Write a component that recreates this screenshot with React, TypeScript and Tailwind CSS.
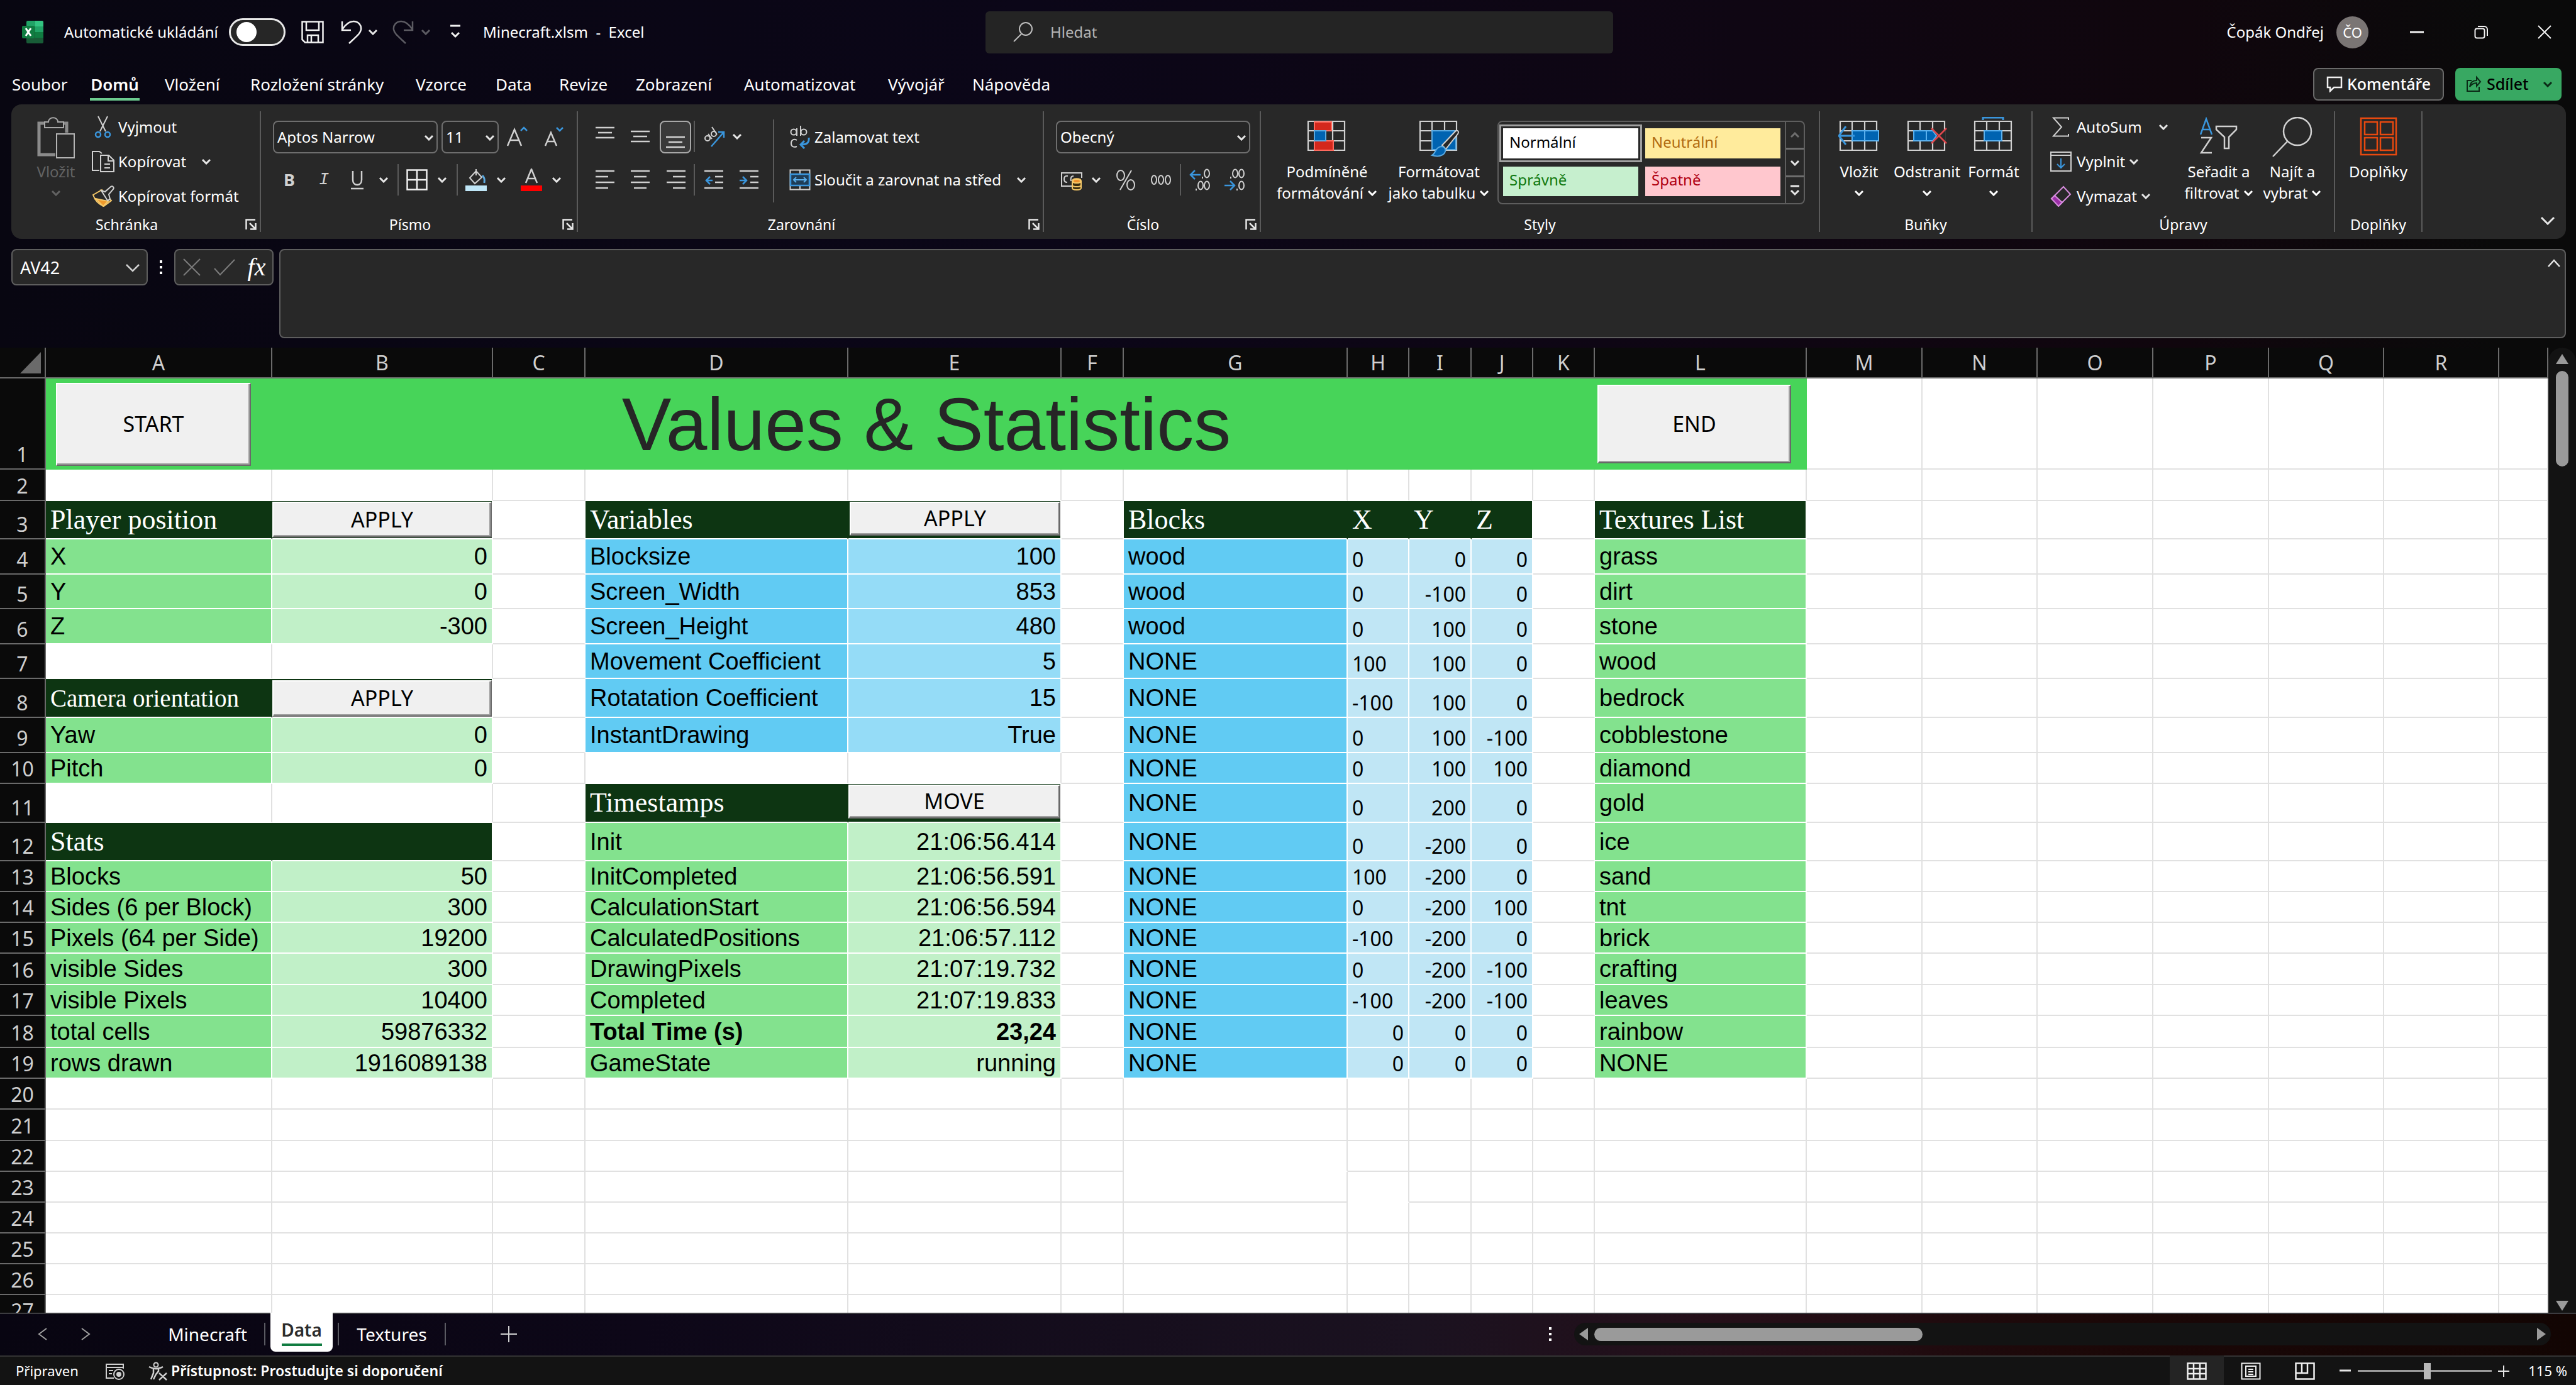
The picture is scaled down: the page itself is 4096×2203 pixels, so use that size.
import React from "react";

/* ---------- shared icons ---------- */

type IconProps = { w: number; h: number; children: React.ReactNode; box?: string; className?: string };

function Icon({ w, h, children, box, className }: IconProps) {
  return (
    <svg
      width={w}
      height={h}
      viewBox={box ?? `0 0 ${w} ${h}`}
      fill="none"
      stroke="#d0d0d0"
      strokeWidth={2}
      aria-hidden="true"
      className={`block shrink-0 ${className ?? ""}`}
    >
      {children}
    </svg>
  );
}

function Chevron({ color = "#e6e6e6", up = false }: { color?: string; up?: boolean }) {
  return (
    <Icon w={16} h={10}>
      <path d={up ? "M2 8l6-6 6 6" : "M2 2l6 6 6-6"} stroke={color} strokeWidth={3} />
    </Icon>
  );
}

function Launcher({ label }: { label: string }) {
  return (
    <button aria-label={label} className="flex h-4 w-[28px] items-center justify-center">
      <Icon w={18} h={18}>
        <path d="M1.5 17V1.5H16M7 7l9 9M16.500 7v9.500H8" stroke="#e6e6e6" strokeWidth={2.5} />
      </Icon>
    </button>
  );
}

function Lines({ rows }: { rows: [number, number, number][] }) {
  return (
    <Icon w={32} h={36}>
      {rows.map(([x, y, w]) => (
        <path key={y} d={`M${x} ${y}h${w}`} strokeWidth={2.500} />
      ))}
    </Icon>
  );
}

function TableGrid({ children }: { children?: React.ReactNode }) {
  return (
    <Icon w={66} h={64}>
      <path d="M3 7h58v46H3zM3 22h58M3 38h58M22 7v46M42 7v46" strokeWidth={2.200} />
      {children}
    </Icon>
  );
}

/* ---------- ribbon building blocks ---------- */

function Group({
  label,
  width,
  launcher,
  children,
}: {
  label: string;
  width: string;
  launcher?: boolean;
  children: React.ReactNode;
}) {
  return (
    <section aria-label={label} className={`my-[11px] flex shrink-0 flex-col border-r-2 border-[#5a5a5a] ${width}`}>
      <div className="flex h-[172px]">{children}</div>
      <div className="flex h-4 items-center leading-4">
        <span className="flex-1 text-center text-[23px]">{label}</span>
        {launcher && <Launcher label={`${label} – možnosti`} />}
      </div>
    </section>
  );
}

function BigButton({
  icon,
  line1,
  line2,
  arrow,
  className,
}: {
  icon: React.ReactNode;
  line1: string;
  line2?: string;
  arrow?: boolean;
  className: string;
}) {
  return (
    <button className={`flex shrink-0 flex-col items-center whitespace-nowrap pt-[9px] ${className}`}>
      <span className="flex h-[64px] items-start justify-center">{icon}</span>
      <span className="mt-[7px] block h-[34px] leading-8">{line1}</span>
      <span className="flex h-8 items-center gap-[6px] leading-8">
        {line2}
        {arrow && <Chevron color="currentColor" />}
      </span>
    </button>
  );
}

function Row({
  icon,
  label,
  arrow,
  iconWidth,
}: {
  icon: React.ReactNode;
  label: string;
  arrow?: string;
  iconWidth: string;
}) {
  return (
    <button className="flex h-[55px] items-center whitespace-nowrap">
      <span className={`flex justify-center ${iconWidth}`}>{icon}</span>
      {label}
      {arrow && (
        <span className={arrow}>
          <Chevron />
        </span>
      )}
    </button>
  );
}

function Tool({ label, className, children }: { label: string; className: string; children: React.ReactNode }) {
  return (
    <button aria-label={label} className={`flex h-[50px] shrink-0 items-center justify-center ${className}`}>
      {children}
    </button>
  );
}

function Combo({ label, value, className }: { label: string; value: string; className: string }) {
  return (
    <div className={`relative h-[52px] shrink-0 ${className}`}>
      <select
        aria-label={label}
        className="h-full w-full appearance-none rounded-lg border-2 border-[#6e6e6e] bg-[#262626] pl-[5px] text-white"
      >
        <option>{value}</option>
      </select>
      <span className="pointer-events-none absolute top-[22px] right-[6px]">
        <Chevron />
      </span>
    </div>
  );
}

const Sep = ({ className = "" }: { className?: string }) => (
  <span className={`h-[50px] w-[2px] shrink-0 bg-[#5a5a5a] ${className}`} />
);

/* ---------- title bar ---------- */

function TitleBar() {
  return (
    <header className="flex h-[102px] shrink-0 items-center">
      <div className="flex w-[1567px] shrink-0 items-center pl-[35px]">
        <svg width="34" height="36" viewBox="0 0 34 36" aria-label="Excel" role="img">
          <path d="M7 2a2 2 0 012-2h12v9H7z" fill="#21a366" />
          <path d="M21 0h11a2 2 0 012 2v7H21z" fill="#33c481" />
          <path d="M7 9h14v9H7z" fill="#107c41" />
          <path d="M21 9h13v9H21z" fill="#21a366" />
          <path d="M21 18h13v9H21z" fill="#107c41" />
          <path d="M7 18h14v9h13v7a2 2 0 01-2 2H9a2 2 0 01-2-2z" fill="#185c37" />
          <rect x="0" y="8" width="20" height="20" rx="2" fill="#107c41" />
          <path d="M6 12l8 12M14 12L6 24" stroke="#fff" strokeWidth="3" fill="none" />
        </svg>
        <label htmlFor="autosave" className="ml-[33px] w-[262px] whitespace-nowrap">
          Automatické ukládání
        </label>
        <input
          id="autosave"
          type="checkbox"
          role="switch"
          className="flex h-[44px] w-[90px] appearance-none items-center rounded-full border-3 border-[#e8e8e8] bg-[#262626] pl-[9px] before:block before:size-[32px] before:rounded-full before:bg-white before:content-['']"
        />
        <Tool label="Uložit" className="w-[86px]">
          <Icon w={36} h={36}>
            <path d="M1.500 1.500h33v33H6l-4.500-4.500zM8 2v13h20V2M10 34V23h17v11M16 24v10" stroke="#f0f0f0" strokeWidth={2.500} />
          </Icon>
        </Tool>
        <Tool label="Zpět" className="w-[38px]">
          <Icon w={34} h={38}>
            <path d="M2 2v14h14M2 15C8 6 14 2 20 2c8 0 13 6 12 13-1 6-5 9-19 22" stroke="#f0f0f0" strokeWidth={2.500} />
          </Icon>
        </Tool>
        <Tool label="Možnosti zpět" className="w-[30px]">
          <Chevron />
        </Tool>
        <Tool label="Znovu" className="ml-[10px] w-[46px]">
          <Icon w={34} h={38}>
            <path d="M32 2v14H18M32 15C26 6 20 2 14 2 6 2 1 8 2 15c1 6 5 9 19 22" stroke="#5c5b62" strokeWidth={2.500} />
          </Icon>
        </Tool>
        <Tool label="Možnosti znovu" className="w-[26px]">
          <Chevron color="#5c5b62" />
        </Tool>
        <Tool label="Přizpůsobit panel" className="ml-[10px] w-[48px]">
          <Icon w={18} h={28}>
            <path d="M1 4h16M3 15l6 6 6-6" stroke="#f0f0f0" strokeWidth={3} />
          </Icon>
        </Tool>
        <h1 className="ml-[20px] whitespace-pre">Minecraft.xlsm  -  Excel</h1>
      </div>
      <label className="flex h-[67px] w-[998px] shrink-0 items-center rounded-md bg-[#242424] pl-[43px]">
        <Icon w={34} h={34}>
          <circle cx="21" cy="12" r="10" stroke="#bdbdbd" />
          <path d="M14 20L2 32" stroke="#bdbdbd" />
        </Icon>
        <input
          aria-label="Hledat"
          placeholder="Hledat"
          className="ml-[26px] flex-1 bg-transparent outline-none placeholder:text-[#b4b4b4]"
        />
      </label>
      <div className="flex flex-1 items-center justify-end whitespace-nowrap">
        <span>Čopák Ondřej</span>
        <button
          aria-label="Účet"
          className="ml-[20px] flex size-[51px] items-center justify-center rounded-full bg-[#7a7574] text-[22px]"
        >
          ČO
        </button>
        <Tool label="Minimalizovat" className="ml-[26px] w-[102px]">
          <Icon w={22} h={4}>
            <path d="M0 2h22" stroke="#f0f0f0" strokeWidth={3} />
          </Icon>
        </Tool>
        <Tool label="Obnovit" className="w-[102px]">
          <Icon w={22} h={22}>
            <rect x="1.500" y="5.500" width="15" height="15" rx="3" stroke="#f0f0f0" />
            <path d="M6 2h10a5 5 0 015 5v10" stroke="#f0f0f0" />
          </Icon>
        </Tool>
        <Tool label="Zavřít" className="w-[100px]">
          <Icon w={22} h={22}>
            <path d="M1 1l20 20M21 1L1 21" stroke="#f0f0f0" />
          </Icon>
        </Tool>
      </div>
    </header>
  );
}

const ribbonTabs = [
  ["Soubor", "w-[124px]"],
  ["Domů", "w-[119px]"],
  ["Vložení", "w-[136px]"],
  ["Rozložení stránky", "w-[263px]"],
  ["Vzorce", "w-[127px]"],
  ["Data", "w-[101px]"],
  ["Revize", "w-[122px]"],
  ["Zobrazení", "w-[172px]"],
  ["Automatizovat", "w-[229px]"],
  ["Vývojář", "w-[134px]"],
  ["Nápověda", "w-[160px]"],
];

function RibbonTabs() {
  return (
    <div className="flex h-[64px] shrink-0 items-center pl-[19px]">
      <nav aria-label="Pás karet" className="flex flex-1 text-[26px]">
        {ribbonTabs.map(([name, width]) => (
          <button key={name} className={`flex shrink-0 justify-start whitespace-nowrap ${width}`}>
            {name === "Domů" ? (
              <span className="flex flex-col font-semibold">
                <span className="mt-[6px] leading-10">{name}</span>
                <span className="mt-[2px] h-[4px] w-[79px] bg-[#6ccb8f]" />
              </span>
            ) : (
              <span className="mt-[6px] leading-10">{name}</span>
            )}
          </button>
        ))}
      </nav>
      <button className="flex h-[52px] w-[208px] items-center justify-center gap-[7px] rounded-lg border-2 border-[#6a6a6a] bg-[#262626] text-[25px] font-medium">
        <Icon w={26} h={26}>
          <path d="M2 2h22v16H12l-6 6v-6H2z" stroke="#f0f0f0" strokeWidth={2.500} />
        </Icon>
        Komentáře
      </button>
      <button className="mr-[23px] ml-[18px] flex h-[52px] w-[169px] items-center gap-[8px] rounded-lg bg-[#38a862] pl-[16px] text-[25px] font-medium text-black">
        <Icon w={26} h={28}>
          <path d="M10 8H3v17h19v-7M7 18c1-7 5-10 11-10V3l6 7-6 7v-5c-5 0-8 2-11 6z" stroke="#0b2b17" />
        </Icon>
        Sdílet
        <span className="ml-[14px]">
          <Chevron color="#0b2b17" />
        </span>
      </button>
    </div>
  );
}

/* ---------- ribbon ---------- */

function FontGroup() {
  return (
    <Group label="Písmo" width="w-[504px]" launcher>
      <div className="flex flex-col pt-[15px] pl-[19px]">
        <div className="flex">
          <Combo label="Písmo" value="Aptos Narrow" className="w-[262px]" />
          <Combo label="Velikost písma" value="11" className="ml-[6px] w-[91px]" />
          <Tool label="Zvětšit písmo" className="w-[58px]">
            <Icon w={34} h={34}>
              <path d="M2 32L13 6l11 26M6 23h14" strokeWidth={2.500} />
              <path d="M23 8l5-5 5 5" stroke="#3a96dd" strokeWidth={2.500} />
            </Icon>
          </Tool>
          <Tool label="Zmenšit písmo" className="w-[60px]">
            <Icon w={32} h={34}>
              <path d="M2 32l9-21 9 21M5 25h12" strokeWidth={2.500} />
              <path d="M20 3l5 5 5-5" stroke="#3a96dd" strokeWidth={2.500} />
            </Icon>
          </Tool>
        </div>
        <div className="mt-[17px] flex text-[27px] text-[#d0d0d0]">
          <Tool label="Tučné" className="w-[52px] font-bold">
            B
          </Tool>
          <Tool label="Kurzíva" className="w-[58px] font-['Liberation_Mono'] italic">
            I
          </Tool>
          <Tool label="Podtržené" className="w-[48px]">
            <Icon w={22} h={34}>
              <path d="M4 3v14c0 5 3 8 7 8s7-3 7-8V3M1 31h20" strokeWidth={2.500} />
            </Icon>
          </Tool>
          <Tool label="Možnosti podtržení" className="w-[36px]">
            <Chevron />
          </Tool>
          <Sep className="ml-[4px]" />
          <Tool label="Ohraničení" className="w-[58px]">
            <Icon w={34} h={34}>
              <path d="M1.500 1.500h31v31h-31zM17 2v30M2 17h30" stroke="#f0f0f0" strokeWidth={2.500} />
            </Icon>
          </Tool>
          <Tool label="Možnosti ohraničení" className="w-[22px]">
            <Chevron />
          </Tool>
          <Sep className="ml-[12px]" />
          <Tool label="Barva výplně" className="w-[58px]">
            <Icon w={34} h={36}>
              <path d="M7 15L17 4l9 10-11 10zM17 4V1m0 3v7" />
              <path d="M27 11c3 3 4 7 3 12" stroke="#5aa9e0" strokeWidth={3} />
              <path d="M0 27h34v9H0z" fill="#bfe6f7" stroke="none" />
            </Icon>
          </Tool>
          <Tool label="Možnosti výplně" className="w-[22px]">
            <Chevron />
          </Tool>
          <Tool label="Barva písma" className="ml-[5px] w-[64px]">
            <Icon w={34} h={36}>
              <path d="M8 23L17 1l9 22M11 16h12" strokeWidth={2.500} />
              <path d="M0 27h34v9H0z" fill="#ff0000" stroke="none" />
            </Icon>
          </Tool>
          <Tool label="Možnosti barvy písma" className="w-[16px]">
            <Chevron />
          </Tool>
        </div>
      </div>
    </Group>
  );
}

function AlignGroup() {
  const arrowLeft = <path d="M12 13l-6 6 6 6M6 19h10" stroke="#3a96dd" strokeWidth={2.500} />;
  const arrowRight = <path d="M6 13l6 6-6 6M12 19H1" stroke="#3a96dd" strokeWidth={2.500} />;
  return (
    <Group label="Zarovnání" width="w-[741px]" launcher>
      <div className="flex w-[310px] shrink-0 flex-col pt-[15px] pl-[15px]">
        <div className="flex h-[52px]">
          <Tool label="Zarovnat nahoru" className="w-[56px]">
            <Lines rows={[[1, 4, 30], [5, 12, 22], [1, 20, 30]]} />
          </Tool>
          <Tool label="Zarovnat na střed svisle" className="w-[56px]">
            <Lines rows={[[1, 10, 30], [5, 18, 22], [1, 26, 30]]} />
          </Tool>
          <Tool label="Zarovnat dolů" className="mx-[3px] h-[52px] w-[50px] rounded-lg border-2 border-[#a8a8a8] bg-[#3a3a3a]">
            <Lines rows={[[1, 18, 30], [5, 26, 22], [1, 34, 30]]} />
          </Tool>
          <Sep className="ml-[1px]" />
          <Tool label="Orientace" className="w-[62px]">
            <Icon w={36} h={36}>
              <circle cx="7" cy="21" r="4" />
              <path d="M8 14l6 8M14 3l8 12" />
              <circle cx="17" cy="14" r="4" />
              <path d="M13 34l20-23M24 11h9v9" stroke="#3a96dd" strokeWidth={2.500} />
            </Icon>
          </Tool>
          <Tool label="Možnosti orientace" className="w-[10px]">
            <Chevron />
          </Tool>
        </div>
        <div className="mt-[17px] flex">
          <Tool label="Zarovnat vlevo" className="w-[56px]">
            <Lines rows={[[1, 4, 30], [1, 13, 20], [1, 22, 30], [1, 31, 20]]} />
          </Tool>
          <Tool label="Zarovnat na střed" className="w-[56px]">
            <Lines rows={[[1, 4, 30], [6, 13, 20], [1, 22, 30], [6, 31, 20]]} />
          </Tool>
          <Tool label="Zarovnat vpravo" className="w-[57px]">
            <Lines rows={[[1, 4, 30], [11, 13, 20], [1, 22, 30], [11, 31, 20]]} />
          </Tool>
          <Sep />
          <Tool label="Zmenšit odsazení" className="w-[60px]">
            <Icon w={36} h={36}>
              <path d="M3 4h30M20 13h13M20 22h13M3 31h30" strokeWidth={2.500} />
              {arrowLeft}
            </Icon>
          </Tool>
          <Tool label="Zvětšit odsazení" className="w-[52px]">
            <Icon w={32} h={36}>
              <path d="M1 4h30M18 13h13M18 22h13M1 31h30" strokeWidth={2.500} />
              {arrowRight}
            </Icon>
          </Tool>
        </div>
      </div>
      <span className="mt-[13px] h-[132px] w-[2px] shrink-0 bg-[#5a5a5a]" />
      <div className="flex flex-col pt-[15px] pl-[18px]">
        <button className="flex h-[52px] items-center whitespace-nowrap">
          <span className="flex w-[46px] justify-center">
            <Icon w={34} h={38}>
              <circle cx="7" cy="11" r="4.500" />
              <path d="M12 5v12M18 1v16" />
              <circle cx="23" cy="11" r="4.500" />
              <path d="M12 24c-5-3-9 0-9 5s4 7 9 5" />
              <path d="M31 20c1 7-2 11-12 11M24 25l-6 6 6 6" stroke="#3a96dd" strokeWidth={3} />
            </Icon>
          </span>
          Zalamovat text
        </button>
        <button className="mt-[16px] flex h-[52px] items-center whitespace-nowrap">
          <span className="flex w-[46px] justify-center">
            <Icon w={34} h={34}>
              <path d="M1.500 1.500h31v31h-31zM17 2v6M17 27v6" />
              <path d="M2 8h30v18H2z" fill="#1f3d57" stroke="#3a96dd" strokeWidth={2.500} />
              <path d="M7 17h20M11 13l-4 4 4 4M23 13l4 4-4 4" stroke="#5ab0ee" />
            </Icon>
          </span>
          Sloučit a zarovnat na střed
          <span className="ml-[24px]">
            <Chevron />
          </span>
        </button>
      </div>
    </Group>
  );
}

function NumberGroup() {
  return (
    <Group label="Číslo" width="w-[345px]" launcher>
      <div className="flex flex-col pt-[15px] pl-[19px]">
        <Combo label="Formát čísla" value="Obecný" className="w-[309px]" />
        <div className="mt-[17px] flex text-[#d0d0d0]">
          <Tool label="Účetnický formát" className="w-[50px]">
            <Icon w={36} h={36}>
              <path d="M18 28H2V7h32v8M12 12c-5-1-6 2-6 5s1 5 5 5M21 12c-4 0-5 3-4 8" />
              <path d="M19 20v11c0 4 14 4 14 0V20c0-5-14-5-14 0c0 4 14 4 14 0M19 26c0 4 14 4 14 0" fill="#3b2d10" stroke="#f5c869" />
              <ellipse cx="26" cy="20" rx="6" ry="3" fill="#f0902c" stroke="#f5c869" />
            </Icon>
          </Tool>
          <Tool label="Možnosti měny" className="w-[28px]">
            <Chevron />
          </Tool>
          <Tool label="Procenta" className="w-[66px]">
            <Icon w={34} h={34}>
              <ellipse cx="9" cy="10" rx="6" ry="8" />
              <ellipse cx="25" cy="25" rx="6" ry="8" />
              <path d="M26 2L8 33" />
            </Icon>
          </Tool>
          <Tool label="Oddělovač tisíců" className="w-[46px]">
            <Icon w={34} h={18}>
              <ellipse cx="6" cy="9" rx="4" ry="7" />
              <ellipse cx="17" cy="9" rx="4" ry="7" />
              <ellipse cx="28" cy="9" rx="4" ry="7" />
            </Icon>
          </Tool>
          <Sep className="ml-[7px]" />
          <Tool label="Přidat desetinné místo" className="w-[60px]">
            <Icon w={34} h={36}>
              <ellipse cx="28" cy="8" rx="4" ry="6.500" />
              <ellipse cx="18" cy="27" rx="4" ry="6.500" />
              <ellipse cx="28" cy="27" rx="4" ry="6.500" />
              <path d="M21 13v3M11 32v3" />
              <path d="M18 10H2M9 3L2 10l7 7" stroke="#3a96dd" strokeWidth={2.500} />
            </Icon>
          </Tool>
          <Tool label="Odebrat desetinné místo" className="w-[50px]">
            <Icon w={34} h={36}>
              <ellipse cx="18" cy="8" rx="4" ry="6.500" />
              <ellipse cx="28" cy="8" rx="4" ry="6.500" />
              <ellipse cx="28" cy="27" rx="4" ry="6.500" />
              <path d="M11 13v3M21 32v3" />
              <path d="M1 27h16M10 20l7 7-7 7" stroke="#3a96dd" strokeWidth={2.500} />
            </Icon>
          </Tool>
        </div>
      </div>
    </Group>
  );
}

function StylesGroup() {
  return (
    <Group label="Styly" width="w-[889px]">
      <BigButton
        className="ml-[20px] w-[170px]"
        line1="Podmíněné"
        line2="formátování"
        arrow
        icon={
          <TableGrid>
            <path d="M13 8h27v14H13zM13 38h30v15H13z" fill="#d4281c" stroke="#ff6a5e" />
            <path d="M13 22h18v16H13z" fill="#0063b1" stroke="#5aa9e0" />
          </TableGrid>
        }
      />
      <BigButton
        className="w-[186px]"
        line1="Formátovat"
        line2="jako tabulku"
        arrow
        icon={
          <TableGrid>
            <path d="M22 22h38v30H22z" fill="#0063b1" stroke="#5aa9e0" />
            <path d="M60 22c4-1 5 2 3 5L44 51l-6-6z" fill="#262626" />
            <path d="M37 47c4 0 7 3 6 8-2 7-12 9-21 6 6-3 5-13 15-14z" fill="#0063b1" stroke="#5aa9e0" />
          </TableGrid>
        }
      />
      <div className="mt-[15px] flex h-[133px] w-[489px] shrink-0 rounded-lg border-2 border-[#5e5e5e]">
        <div className="grid flex-1 grid-cols-2 gap-x-[11px] gap-y-[13px] px-[7px] pt-[10px] pb-[11px] text-left">
          <button className="bg-white pb-[4px] pl-[10px] text-left text-black outline-3 outline-offset-[3px] outline-[#a0a0a0]">
            Normální
          </button>
          <button className="bg-[#ffeb9c] pb-[4px] pl-[10px] text-left text-[#b26b10]">Neutrální</button>
          <button className="bg-[#c6efce] pb-[4px] pl-[10px] text-left text-[#117a11]">Správně</button>
          <button className="bg-[#ffc7ce] pb-[4px] pl-[10px] text-left text-[#b00012]">Špatně</button>
        </div>
        <div className="flex w-[30px] flex-col divide-y-3 divide-[#6e6e6e] border-l-2 border-[#5e5e5e]">
          <button aria-label="Předchozí styly" className="flex flex-1 items-center justify-center">
            <Chevron up color="#6e6e6e" />
          </button>
          <button aria-label="Další styly" className="flex flex-1 items-center justify-center">
            <Chevron />
          </button>
          <button aria-label="Více stylů" className="flex flex-1 items-center justify-center">
            <Icon w={16} h={20}>
              <path d="M1 3h14M2 10l6 6 6-6" stroke="#e6e6e6" strokeWidth={3} />
            </Icon>
          </button>
        </div>
      </div>
    </Group>
  );
}

function Ribbon() {
  return (
    <div className="mr-[16px] ml-[18px] flex h-[214px] shrink-0 rounded-2xl bg-[#282828]">
      <Group label="Schránka" width="w-[397px]" launcher>
        <BigButton
          className="ml-[20px] w-[102px] text-[#636363]"
          line1="Vložit"
          arrow
          icon={
            <Icon w={62} h={66}>
              <path d="M12 10H4v50h26M44 10h4v15" stroke="#8b8b8b" strokeWidth={5} />
              <path d="M13 8h6c0-9 15-9 15 0h9v9H13z" stroke="#a8a8a8" fill="#282828" />
              <path d="M32 27h28v38H32z" stroke="#b4b4b4" fill="#282828" />
            </Icon>
          }
        />
        <div className="-mt-[3px] flex flex-col items-start">
          <Row
            label="Vyjmout"
            iconWidth="w-[48px]"
            icon={
              <Icon w={30} h={36}>
                <path d="M7 1l12 24M22 1L10 25" />
                <circle cx="7" cy="30" r="4" stroke="#3a96dd" strokeWidth={2.500} />
                <circle cx="22" cy="30" r="4" stroke="#3a96dd" strokeWidth={2.500} />
              </Icon>
            }
          />
          <Row
            label="Kopírovat"
            iconWidth="w-[48px]"
            arrow="ml-[24px]"
            icon={
              <Icon w={36} h={36}>
                <path d="M16 5l-4-3H1v30h11" />
                <path d="M14 8h13l8 8v18H14zM26 8v9h8M20 22h9M20 28h9" />
              </Icon>
            }
          />
          <Row
            label="Kopírovat formát"
            iconWidth="w-[48px]"
            icon={
              <Icon w={36} h={34}>
                <path d="M2 15l14-8 15 17-12 9C11 30 5 24 2 15z" fill="#282828" stroke="#f5c869" />
                <path d="M6 21l20 4-8 8z" fill="#f09a2c" stroke="#f5c869" />
                <path d="M15 8l6 2 9-8c3-2 6 1 4 4l-7 8 2 8-4 2z" fill="#282828" />
              </Icon>
            }
          />
        </div>
      </Group>
      <FontGroup />
      <AlignGroup />
      <NumberGroup />
      <StylesGroup />
      <Group label="Buňky" width="w-[338px]">
        <BigButton
          className="ml-[5px] w-[114px]"
          line1="Vložit"
          arrow
          icon={
            <TableGrid>
              <path d="M22 22h42v16H22z" fill="#0063b1" stroke="#5ab0ee" />
              <path d="M42 22v16" stroke="#5ab0ee" />
              <path d="M12 15L1 30l11 14M1 30h25" stroke="#3a96dd" strokeWidth={3} />
            </TableGrid>
          }
        />
        <BigButton
          className="w-[102px]"
          line1="Odstranit"
          arrow
          icon={
            <TableGrid>
              <path d="M44 20h18v20H44z" fill="#282828" stroke="none" />
              <path d="M12 22h30l6 8-6 8H12z" fill="#0063b1" stroke="#5ab0ee" />
              <path d="M32 22v16" stroke="#5ab0ee" />
              <path d="M40 18l24 24M64 18L40 42" stroke="#e0484d" strokeWidth={2.500} />
            </TableGrid>
          }
        />
        <BigButton
          className="w-[110px]"
          line1="Formát"
          arrow
          icon={
            <TableGrid>
              <path d="M18 22h28v16H18z" fill="#0063b1" stroke="#5ab0ee" />
              <path d="M16 1h32M16 0v5M48 0v5" stroke="#3a96dd" strokeWidth={3} />
            </TableGrid>
          }
        />
      </Group>
      <Group label="Úpravy" width="w-[481px]">
        <div className="-mt-[3px] flex w-[236px] shrink-0 flex-col items-start pl-[20px]">
          <Row
            label="AutoSum"
            iconWidth="w-[50px]"
            arrow="ml-[26px]"
            icon={
              <Icon w={28} h={32}>
                <path d="M26 5V1.500H2L15 16 2 30.500h24V27" />
              </Icon>
            }
          />
          <Row
            label="Vyplnit"
            iconWidth="w-[50px]"
            arrow="ml-[6px]"
            icon={
              <Icon w={34} h={32}>
                <path d="M1 1h32v30H1zM1 6h32" />
                <path d="M17 11v15M11 20l6 6 6-6" stroke="#3a96dd" />
              </Icon>
            }
          />
          <Row
            label="Vymazat"
            iconWidth="w-[50px]"
            arrow="ml-[6px]"
            icon={
              <Icon w={34} h={34}>
                <path d="M21 2l11 12-18 18L2 21z" stroke="#d58bdc" />
                <path d="M7 16l12 11-6 6L2 21z" fill="#9c2fa8" stroke="#d58bdc" />
              </Icon>
            }
          />
        </div>
        <BigButton
          className="w-[120px]"
          line1="Seřadit a"
          line2="filtrovat"
          arrow
          icon={
            <Icon w={62} h={62}>
              <path d="M2 28L11 3l9 25M5 20h12" stroke="#3a96dd" strokeWidth={2.500} />
              <path d="M3 33h16L3 57h17" strokeWidth={2.500} />
              <path d="M27 15h32v5L47 32v18h-7V32L27 20z" strokeWidth={2.500} />
            </Icon>
          }
        />
        <BigButton
          className="w-[114px]"
          line1="Najít a"
          line2="vybrat"
          arrow
          icon={
            <Icon w={64} h={64}>
              <circle cx="40" cy="23" r="22" strokeWidth={2.500} />
              <path d="M24 39L1 63" strokeWidth={2.500} />
            </Icon>
          }
        />
      </Group>
      <Group label="Doplňky" width="w-[139px]">
        <BigButton
          className="w-[137px]"
          line1="Doplňky"
          icon={
            <Icon w={60} h={62}>
              <path
                d="M2 2h56v58H2zM8 8h20v20H8zM33 8h20v20H33zM8 33h20v20H8zM33 33h20v20H33z"
                stroke="#e8490f"
                strokeWidth={2.500}
              />
            </Icon>
          }
        />
      </Group>
      <div className="flex flex-1 items-end justify-end pr-[17px] pb-[22px]">
        <button aria-label="Sbalit pás karet">
          <Icon w={24} h={14}>
            <path d="M2 2l10 10L22 2" stroke="#e6e6e6" strokeWidth={3} />
          </Icon>
        </button>
      </div>
    </div>
  );
}

/* ---------- formula bar ---------- */

function FormulaBar() {
  return (
    <div className="mr-[16px] ml-[18px] flex h-[173px] shrink-0 pt-[16px]">
      <div className="relative h-[58px] w-[217px] shrink-0">
        <input
          aria-label="Pole názvů"
          defaultValue="AV42"
          className="h-full w-full rounded-lg border-2 border-[#5e5e5e] bg-[#282828] pl-[12px] text-[27px]"
        />
        <span className="pointer-events-none absolute top-[23px] right-[12px]">
          <Icon w={24} h={14}>
            <path d="M2 2l10 10L22 2" stroke="#d0d0d0" strokeWidth={2.500} />
          </Icon>
        </span>
      </div>
      <span className="flex h-[58px] w-[42px] shrink-0 flex-col items-center justify-center gap-[5px]">
        <span className="size-[4px] bg-white" />
        <span className="size-[4px] bg-white" />
        <span className="size-[4px] bg-white" />
      </span>
      <div className="flex h-[58px] w-[158px] shrink-0 items-center rounded-lg border-2 border-[#5e5e5e] bg-[#282828]">
        <Tool label="Zrušit" className="w-[52px]">
          <Icon w={28} h={28}>
            <path d="M1 1l26 26M27 1L1 27" stroke="#7c7c7c" />
          </Icon>
        </Tool>
        <Tool label="Zadat" className="w-[52px]">
          <Icon w={36} h={28}>
            <path d="M2 16l9 10L34 2" stroke="#7c7c7c" />
          </Icon>
        </Tool>
        <Tool label="Vložit funkci" className="w-[50px] font-['Liberation_Serif'] text-[40px] italic">
          fx
        </Tool>
      </div>
      <div className="relative ml-[9px] h-[142px] flex-1">
        <textarea
          aria-label="Řádek vzorců"
          className="block h-full w-full resize-none rounded-lg border-2 border-[#5e5e5e] bg-[#282828] outline-none"
        />
        <button aria-label="Sbalit řádek vzorců" className="absolute top-[16px] right-[8px]">
          <Icon w={22} h={14}>
            <path d="M2 12l9-10 9 10" stroke="#e6e6e6" strokeWidth={2.500} />
          </Icon>
        </button>
      </div>
    </div>
  );
}

/* ---------- worksheet ---------- */

const columns: [string, string][] = [
  ["A", "w-[360px]"],
  ["B", "w-[351px]"],
  ["C", "w-[147px]"],
  ["D", "w-[418px]"],
  ["E", "w-[339px]"],
  ["F", "w-[99px]"],
  ["G", "w-[356px]"],
  ["H", "w-[98px]"],
  ["I", "w-[99px]"],
  ["J", "w-[98px]"],
  ["K", "w-[98px]"],
  ["L", "w-[337px]"],
  ["M", "w-[184px]"],
  ["N", "w-[183px]"],
  ["O", "w-[184px]"],
  ["P", "w-[184px]"],
  ["Q", "w-[183px]"],
  ["R", "w-[183px]"],
  ["", ""],
];

const rowHeights: Record<number, string> = {
  2: "h-[50px]",
  3: "h-[61px]",
  4: "h-[56px]",
  5: "h-[55px]",
  6: "h-[56px]",
  7: "h-[55px]",
  8: "h-[62px]",
  9: "h-[56px]",
  11: "h-[62px]",
  12: "h-[61px]",
  16: "h-[50px]",
  18: "h-[51px]",
  21: "h-[50px]",
};

type Kind = "dark" | "label" | "value" | "blue" | "sky" | "pale";
type Cell = { kind: Kind; text?: string; bold?: boolean; left?: boolean; small?: boolean; button?: [string, string] };

const cells: Record<string, Cell> = {};

function fill(col: string, from: number, kind: Kind, texts: string[]) {
  texts.forEach((text, i) => {
    cells[`${col}${from + i}`] = { kind, text };
  });
}

cells.A3 = { kind: "dark", text: "Player position" };
cells.B3 = { kind: "dark", button: ["APPLY", "h-[57px] mt-[1px]"] };
fill("A", 4, "label", ["X", "Y", "Z"]);
fill("B", 4, "value", ["0", "0", "-300"]);
cells.A8 = { kind: "dark", text: "Camera orientation", small: true };
cells.B8 = { kind: "dark", button: ["APPLY", "h-[58px] mt-[2px]"] };
fill("A", 9, "label", ["Yaw", "Pitch"]);
fill("B", 9, "value", ["0", "0"]);
cells.A12 = { kind: "dark", text: "Stats" };
cells.B12 = { kind: "dark" };
fill("A", 13, "label", [
  "Blocks",
  "Sides (6 per Block)",
  "Pixels (64 per Side)",
  "visible Sides",
  "visible Pixels",
  "total cells",
  "rows drawn",
]);
fill("B", 13, "value", ["50", "300", "19200", "300", "10400", "59876332", "1916089138"]);

cells.D3 = { kind: "dark", text: "Variables" };
cells.E3 = { kind: "dark", button: ["APPLY", "h-[54px] mt-[1px] ml-[2px]"] };
fill("D", 4, "blue", [
  "Blocksize",
  "Screen_Width",
  "Screen_Height",
  "Movement Coefficient",
  "Rotatation Coefficient",
  "InstantDrawing",
]);
fill("E", 4, "sky", ["100", "853", "480", "5", "15", "True"]);
cells.D11 = { kind: "dark", text: "Timestamps" };
cells.E11 = { kind: "dark", button: ["MOVE", "h-[54px] mt-[1px]"] };
fill("D", 12, "label", [
  "Init",
  "InitCompleted",
  "CalculationStart",
  "CalculatedPositions",
  "DrawingPixels",
  "Completed",
  "Total Time (s)",
  "GameState",
]);
fill("E", 12, "value", [
  "21:06:56.414",
  "21:06:56.591",
  "21:06:56.594",
  "21:06:57.112",
  "21:07:19.732",
  "21:07:19.833",
  "23,24",
  "running",
]);
cells.D18.bold = true;
cells.E18.bold = true;

fill("G", 3, "dark", ["Blocks"]);
fill("H", 3, "dark", ["X"]);
fill("I", 3, "dark", ["Y"]);
fill("J", 3, "dark", ["Z"]);
fill("G", 4, "blue", ["wood", "wood", "wood", ...Array(13).fill("NONE")]);
fill("H", 4, "pale", ["0", "0", "0", "100", "-100", "0", "0", "0", "0", "100", "0", "-100", "0", "-100", "0", "0"]);
fill("I", 4, "pale", [
  "0", "-100", "100", "100", "100", "100", "100", "200", "-200", "-200", "-200", "-200", "-200", "-200", "0", "0",
]);
fill("J", 4, "pale", ["0", "0", "0", "0", "0", "-100", "100", "0", "0", "0", "100", "0", "-100", "-100", "0", "0"]);
for (let r = 4; r <= 17; r++) cells[`H${r}`].left = true;

cells.L3 = { kind: "dark", text: "Textures List" };
fill("L", 4, "label", [
  "grass", "dirt", "stone", "wood", "bedrock", "cobblestone", "diamond", "gold",
  "ice", "sand", "tnt", "brick", "crafting", "leaves", "rainbow", "NONE",
]);

const kindClass: Record<Kind, string> = {
  dark: "bg-[#0d3512] text-white text-left font-['Liberation_Serif'] text-[44px]",
  label: "bg-[#83e28e] text-left",
  value: "bg-[#c1f0c8] text-right",
  blue: "bg-[#61cbf3] text-left",
  sky: "bg-[#95dcf7] text-right",
  pale: "bg-[#c0e6f5] text-right align-bottom font-['Noto_Sans'] text-[32px]",
};

const merged = new Set(["G22", "H23"]);

function SheetButton({ label, className }: { label: string; className: string }) {
  return (
    <button
      className={`items-center justify-center border-2 border-t-white border-r-[#696969] border-b-[#696969] border-l-white bg-[#f0f0f0] pb-[2px] font-['Noto_Sans'] text-[34px] leading-[44px] text-black shadow-[inset_-2px_-2px_0_#a0a0a0] ${className}`}
    >
      {label}
    </button>
  );
}

function SheetCell({ index, row }: { index: number; row: number }) {
  const col = columns[index][0];
  const cell = cells[`${col}${row}`];
  const next = cells[`${columns[index + 1]?.[0]}${row}`];
  const below = cells[`${col}${row + 1}`];
  const bothDark = cell?.kind === "dark" && next?.kind === "dark";
  const right = bothDark ? "border-r-[#0d3512]" : cell || next ? "border-r-white" : "border-r-[#e1e1e1]";
  const bottom = cell || below || merged.has(`${col}${row}`) ? "border-b-white" : "border-b-[#e1e1e1]";
  if (!cell) return <td className={`border-r-2 border-b-2 ${right} ${bottom}`} />;
  if (cell.button)
    return (
      <td className={`border-r-2 border-b-2 bg-[#0d3512] p-0 align-top ${right} ${bottom}`}>
        <div className="flex">
          <SheetButton label={cell.button[0]} className={`flex flex-1 ${cell.button[1]}`} />
        </div>
      </td>
    );
  return (
    <td
      className={`overflow-visible border-r-2 border-b-2 py-0 pr-[7px] pl-[7px] leading-[44px] whitespace-nowrap ${right} ${bottom} ${kindClass[cell.kind]} ${cell.bold ? "font-bold" : ""}`}
    >
      <span className={cell.small ? "text-[39px]" : cell.left ? "block text-left" : ""}>{cell.text}</span>
    </td>
  );
}

function Sheet() {
  const rows = Array.from({ length: 26 }, (_, i) => i + 2);
  const head = "border-b-2 border-[#6a6a6a] bg-[#0a0a0a] font-['Noto_Sans'] text-[32px] font-normal text-[#cfcfcf]";
  return (
    <main className="flex min-h-0 flex-1">
      <div className="min-w-0 flex-1 overflow-hidden bg-white">
        <table className="w-full table-fixed border-separate border-spacing-0 font-['Liberation_Sans'] text-[38px] text-black">
          <colgroup>
            <col className="w-[73px]" />
            {columns.map(([name, width], i) => (
              <col key={name || i} className={width} />
            ))}
          </colgroup>
          <thead>
            <tr className="h-[49px]">
              <th aria-label="Vybrat vše" className="border-r-2 border-b-2 border-[#6a6a6a] bg-[#0a0a0a] p-0">
                <svg width="34" height="36" viewBox="0 0 34 36" className="mr-[5px] ml-auto block" aria-hidden="true">
                  <path d="M33 1v34H0z" fill="#6a6a6a" />
                </svg>
              </th>
              {columns.map(([name], i) => (
                <th key={name || i} scope="col" className={`border-r-2 p-0 leading-[44px] ${head}`}>
                  {name}
                </th>
              ))}
            </tr>
          </thead>
          <tbody>
            <tr className="h-[145px]">
              <th scope="row" className={`border-r-2 p-0 align-bottom leading-[44px] ${head}`}>
                1
              </th>
              <td colSpan={12} className="bg-[#47d459] p-0">
                <div className="grid grid-cols-[1fr_auto_1fr] items-center">
                  <SheetButton label="START" className="ml-[16px] flex h-[132px] w-[310px]" />
                  <span className="text-[118px] leading-[132px] text-[#262626]">Values &amp; Statistics</span>
                  <SheetButton label="END" className="mr-[25px] flex h-[125px] w-[308px] justify-self-end" />
                </div>
              </td>
              {columns.slice(12).map(([name], i) => (
                <td key={name || i} className="border-r-2 border-b-2 border-[#e1e1e1]" />
              ))}
            </tr>
            {rows.map((row) => (
              <tr key={row} className={rowHeights[row] ?? "h-[49px]"}>
                <th scope="row" className={`border-r-2 p-0 align-bottom leading-[44px] ${head}`}>
                  {row}
                </th>
                {columns.map((_, i) => (
                  <SheetCell key={i} index={i} row={row} />
                ))}
              </tr>
            ))}
          </tbody>
        </table>
      </div>
      <div className="flex w-[44px] shrink-0 flex-col items-center rounded-t-full bg-[#131313] pt-[10px] pb-[3px]">
        <Icon w={20} h={16}>
          <path d="M10 0l10 16H0z" fill="#9a9a9a" stroke="none" />
        </Icon>
        <span className="mt-[11px] h-[152px] w-[20px] rounded-full bg-[#9a9a9a]" />
        <Icon w={20} h={16} className="mt-auto">
          <path d="M10 16L0 0h20z" fill="#9a9a9a" stroke="none" />
        </Icon>
      </div>
    </main>
  );
}

/* ---------- bottom bars ---------- */

function SheetTabs() {
  return (
    <div className="flex h-[68px] shrink-0 border-t-2 border-[#3c3c40] bg-[linear-gradient(90deg,#080511_0%,#0d0718_25%,#1b1220_55%,#250f18_68%,#1c0808_80%,#120503_100%)] text-[28px]">
      <Tool label="Předchozí list" className="ml-[34px] h-[64px] w-[68px]">
        <Icon w={16} h={22}>
          <path d="M14 2L2 11l12 9" stroke="#a0a0a0" />
        </Icon>
      </Tool>
      <Tool label="Další list" className="h-[64px] w-[68px]">
        <Icon w={16} h={22}>
          <path d="M2 2l12 9-12 9" stroke="#a0a0a0" />
        </Icon>
      </Tool>
      <button className="ml-[70px] h-[64px] w-[180px] text-center">Minecraft</button>
      <span className="mt-[14px] h-[36px] w-[2px] bg-[#5a5a62]" />
      <button className="-mt-[2px] ml-[8px] flex h-[62px] w-[99px] flex-col items-center rounded-b-lg bg-white font-semibold text-[#2c2c2c]">
        <span className="mt-[9px] leading-9">Data</span>
        <span className="mt-[4px] h-[4px] w-[64px] bg-[#107c41]" />
      </button>
      <span className="mt-[14px] ml-[8px] h-[36px] w-[2px] bg-[#5a5a62]" />
      <button className="h-[64px] w-[168px] text-center">Textures</button>
      <span className="mt-[14px] h-[36px] w-[2px] bg-[#5a5a62]" />
      <Tool label="Nový list" className="ml-[66px] h-[64px] w-[68px]">
        <Icon w={26} h={26}>
          <path d="M13 0v26M0 13h26" stroke="#d0d0d0" />
        </Icon>
      </Tool>
      <div className="flex h-[64px] flex-1 items-center justify-end pr-[40px]">
        <span className="mr-[36px] flex flex-col gap-[5px]">
          <span className="size-[4px] bg-white" />
          <span className="size-[4px] bg-white" />
          <span className="size-[4px] bg-white" />
        </span>
        <div className="flex h-[36px] w-[1553px] items-center rounded-full bg-[#131313] px-[8px]">
          <Icon w={14} h={20}>
            <path d="M14 0v20L0 10z" fill="#9a9a9a" stroke="none" />
          </Icon>
          <span className="ml-[10px] h-[21px] w-[522px] rounded-full bg-[#9a9a9a]" />
          <Icon w={14} h={20} className="ml-auto">
            <path d="M0 0v20l14-10z" fill="#9a9a9a" stroke="none" />
          </Icon>
        </div>
      </div>
    </div>
  );
}

function StatusBar() {
  return (
    <footer className="flex h-[47px] shrink-0 items-center border-t-2 border-[#333] bg-[#131313] pl-[25px] text-[22px] whitespace-nowrap">
      <span className="w-[142px]">Připraven</span>
      <Icon w={32} h={28}>
        <path d="M14 25H2V3h27v7M2 8h27M6 13h7M6 18h5" />
        <circle cx="22" cy="19" r="8" />
        <circle cx="22" cy="19" r="3" fill="#d0d0d0" />
      </Icon>
      <button className="ml-[36px] flex items-center gap-[5px] text-[23px] font-semibold">
        <Icon w={32} h={30}>
          <circle cx="13" cy="5" r="3.500" />
          <path d="M2 8c7 4 15 4 22 0M9 11v7L5 28M17 11v4l-4 5-4 8M18 18l12 11M30 18L18 29" strokeWidth={2.500} />
        </Icon>
        Přístupnost: Prostudujte si doporučení
      </button>
      <div className="flex flex-1 items-center justify-end pr-[14px]">
        <Tool label="Normálně" className="h-[45px] w-[86px] bg-[#242424]">
          <Icon w={32} h={28}>
            <path d="M1.500 1.500h29v25h-29zM2 10h28M2 18h28M11 2v24M21 2v24" stroke="#f0f0f0" strokeWidth={2.500} />
          </Icon>
        </Tool>
        <Tool label="Rozložení stránky" className="h-[45px] w-[86px]">
          <Icon w={32} h={28}>
            <path d="M1.500 1.500h29v25h-29zM8 6h16v16H8zM12 11h8M12 15h8M12 19h8" stroke="#f0f0f0" />
          </Icon>
        </Tool>
        <Tool label="Zalomení stránky" className="h-[45px] w-[86px]">
          <Icon w={32} h={28}>
            <path d="M1.500 1.500h29v25h-29zM1 17h19V2M11 2v15" stroke="#f0f0f0" strokeWidth={2.500} />
          </Icon>
        </Tool>
        <button aria-label="Oddálit" className="flex h-[45px] w-[30px] items-center justify-end">
          <Icon w={18} h={18}>
            <path d="M0 8h18" strokeWidth={3} stroke="#e6e6e6" />
          </Icon>
        </button>
        <input
          type="range"
          aria-label="Lupa"
          min={0}
          max={100}
          defaultValue={52}
          className="mr-[10px] ml-[11px] h-[3px] w-[213px] appearance-none bg-[#9a9a9a] [&::-webkit-slider-thumb]:h-[26px] [&::-webkit-slider-thumb]:w-[11px] [&::-webkit-slider-thumb]:appearance-none [&::-webkit-slider-thumb]:bg-[#b8b8b8]"
        />
        <button aria-label="Přiblížit">
          <Icon w={18} h={18}>
            <path d="M0 9h18M9 0v18" stroke="#e6e6e6" />
          </Icon>
        </button>
        <span className="ml-[30px]">115 %</span>
      </div>
    </footer>
  );
}

export default function App() {
  return (
    <div className="flex h-screen w-full flex-col overflow-hidden bg-[linear-gradient(90deg,#080611_0%,#0b0618_40%,#0f0613_68%,#10060d_85%,#0a0a0a_97%)] font-['Noto_Sans','Open_Sans',sans-serif] text-[24px] text-white">
      <TitleBar />
      <RibbonTabs />
      <Ribbon />
      <FormulaBar />
      <Sheet />
      <SheetTabs />
      <StatusBar />
    </div>
  );
}
